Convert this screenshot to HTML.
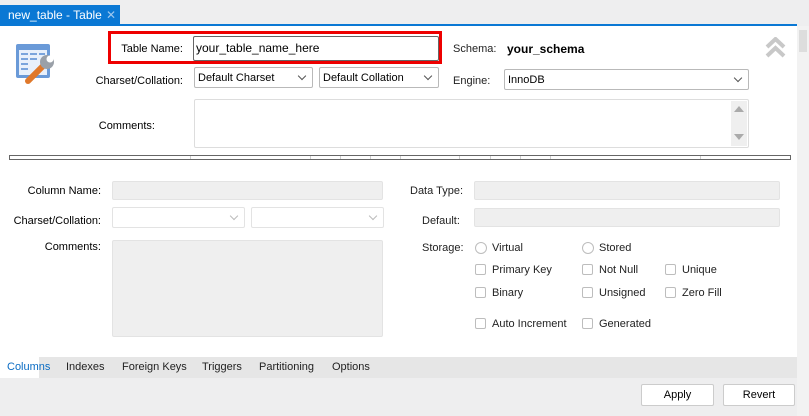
<!DOCTYPE html>
<html><head><style>
body{margin:0;width:809px;height:416px;overflow:hidden;background:#fff;font-family:"Liberation Sans",sans-serif;font-size:11px;color:#000;position:relative}
.a{position:absolute}
.lbl{position:absolute;text-align:right;white-space:nowrap}
.in{position:absolute;border:1px solid #b9b9b9;background:#fff;box-sizing:border-box;padding:4px 3px 0;white-space:nowrap;border-radius:2px}
.dis{position:absolute;border:1px solid #e3e3e3;background:#efefef;box-sizing:border-box;border-radius:2px}
.disc{position:absolute;border:1px solid #e3e3e3;background:#fff;box-sizing:border-box;border-radius:2px}
.chev{position:absolute;right:7px;top:5px;width:5px;height:5px;border-right:1px solid #555;border-bottom:1px solid #555;transform:rotate(45deg)}
.disc .chev{border-color:#bbb}
.cb{position:absolute;width:11px;height:11px;border:1px solid #bdbdbd;border-radius:2px;box-sizing:border-box;background:#fff}
.rb{position:absolute;width:12px;height:12px;border:1px solid #bdbdbd;border-radius:50%;box-sizing:border-box}
.t{position:absolute;white-space:nowrap;color:#222}
.sep{position:absolute;top:156px;width:1px;height:3px;background:#ccc}
</style></head><body>
<div class="a" style="left:0;top:0;width:809px;height:26px;background:#eeeeef"></div>
<div class="a" style="left:0;top:24px;width:797px;height:2px;background:#0a78d4"></div>
<div class="a" style="left:0;top:5px;width:120px;height:21px;background:#0a78d4;color:#fff;font-size:12px"><span class="a" style="left:8px;top:3px">new_table - Table</span><span class="a" style="left:106px;top:3px;color:#9cc7ef">✕</span></div>
<div class="a" style="left:797px;top:26px;width:12px;height:390px;background:#f2f2f2"></div>
<div class="a" style="left:799px;top:30px;width:8px;height:22px;background:#ddd"></div>

<svg class="a" style="left:14px;top:42px" width="46" height="44" viewBox="0 0 46 44">
<rect x="2" y="2" width="34" height="34" fill="#6a9ad8" rx="2"/><rect x="5" y="8" width="28" height="25" fill="#e8f0fb"/>
<g fill="#7aa4dc"><rect x="7" y="11" width="7" height="2"/><rect x="16" y="11" width="7" height="2"/><rect x="25" y="11" width="6" height="2"/><rect x="7" y="16" width="7" height="2"/><rect x="16" y="16" width="7" height="2"/><rect x="7" y="21" width="7" height="2"/><rect x="7" y="26" width="7" height="2"/></g>
<path d="M14 39 L30 23" stroke="#e0782a" stroke-width="6" stroke-linecap="round"/>
<circle cx="33" cy="20" r="7" fill="#9aa0a8"/><circle cx="36" cy="17" r="3.5" fill="#fff"/></svg>

<div class="a" style="left:108px;top:31px;width:334px;height:33px;border:3px solid #e00;box-sizing:border-box"></div>
<div class="lbl" style="left:100px;width:83px;top:43px">Table Name:</div>
<div class="in" style="left:193px;top:36px;width:246px;height:25px;border-color:#666;font-size:12px;padding:4px 2px 0">your_table_name_here</div>
<div class="t" style="left:453px;top:43px">Schema:</div>
<div class="t" style="left:507px;top:42px;font-weight:bold;font-size:12px;color:#000">your_schema</div>
<svg class="a" style="left:765px;top:37px" width="21" height="22"><path d="M2 10 L10.5 2 L19 10 M2 19 L10.5 11 L19 19" stroke="#c8c8c8" stroke-width="4" fill="none"/></svg>

<div class="lbl" style="left:80px;width:103px;top:75px">Charset/Collation:</div>
<div class="in" style="left:194px;top:67px;width:119px;height:21px">Default Charset<span class="chev"></span></div>
<div class="in" style="left:319px;top:67px;width:120px;height:21px">Default Collation<span class="chev"></span></div>
<div class="t" style="left:453px;top:75px">Engine:</div>
<div class="in" style="left:504px;top:69px;width:245px;height:21px">InnoDB<span class="chev"></span></div>

<div class="lbl" style="left:90px;width:65px;top:120px">Comments:</div>
<div class="in" style="left:194px;top:99px;width:555px;height:49px;border-color:#ddd"></div>
<div class="a" style="left:731px;top:101px;width:16px;height:45px;background:#efefef"></div>
<div class="a" style="left:734px;top:106px;border:5px solid transparent;border-bottom:6px solid #aaa;border-top:0"></div>
<div class="a" style="left:734px;top:134px;border:5px solid transparent;border-top:6px solid #aaa;border-bottom:0"></div>

<div class="a" style="left:9px;top:155px;width:782px;height:5px;border:1px solid #666;box-sizing:border-box"></div>
<div class="sep" style="left:190px"></div><div class="sep" style="left:310px"></div><div class="sep" style="left:340px"></div><div class="sep" style="left:370px"></div><div class="sep" style="left:400px"></div><div class="sep" style="left:459px"></div><div class="sep" style="left:490px"></div><div class="sep" style="left:520px"></div><div class="sep" style="left:550px"></div><div class="sep" style="left:700px"></div>

<div class="lbl" style="left:20px;width:81px;top:185px">Column Name:</div>
<div class="dis" style="left:112px;top:181px;width:271px;height:19px"></div>
<div class="lbl" style="left:5px;width:96px;top:215px">Charset/Collation:</div>
<div class="disc" style="left:112px;top:207px;width:133px;height:21px"><span class="chev"></span></div>
<div class="disc" style="left:251px;top:207px;width:133px;height:21px"><span class="chev"></span></div>
<div class="lbl" style="left:20px;width:81px;top:241px">Comments:</div>
<div class="dis" style="left:112px;top:240px;width:271px;height:97px"></div>

<div class="t" style="left:410px;top:185px">Data Type:</div>
<div class="dis" style="left:474px;top:181px;width:306px;height:19px"></div>
<div class="t" style="left:422px;top:215px">Default:</div>
<div class="dis" style="left:474px;top:208px;width:306px;height:19px"></div>
<div class="t" style="left:422px;top:242px">Storage:</div>
<div class="rb" style="left:475px;top:242px"></div><div class="t" style="left:492px;top:242px">Virtual</div>
<div class="rb" style="left:582px;top:242px"></div><div class="t" style="left:599px;top:242px">Stored</div>
<div class="cb" style="left:475px;top:264px"></div><div class="t" style="left:492px;top:264px">Primary Key</div>
<div class="cb" style="left:582px;top:264px"></div><div class="t" style="left:599px;top:264px">Not Null</div>
<div class="cb" style="left:665px;top:264px"></div><div class="t" style="left:682px;top:264px">Unique</div>
<div class="cb" style="left:475px;top:287px"></div><div class="t" style="left:492px;top:287px">Binary</div>
<div class="cb" style="left:582px;top:287px"></div><div class="t" style="left:599px;top:287px">Unsigned</div>
<div class="cb" style="left:665px;top:287px"></div><div class="t" style="left:682px;top:287px">Zero Fill</div>
<div class="cb" style="left:475px;top:318px"></div><div class="t" style="left:492px;top:318px">Auto Increment</div>
<div class="cb" style="left:582px;top:318px"></div><div class="t" style="left:599px;top:318px">Generated</div>

<div class="a" style="left:0;top:357px;width:797px;height:21px;background:#e6e6e6"></div>
<div class="a" style="left:0;top:357px;width:39px;height:21px;background:#fff"></div>
<div class="t" style="left:7px;top:361px;color:#0a6cc4">Columns</div>
<div class="t" style="left:66px;top:361px">Indexes</div>
<div class="t" style="left:122px;top:361px">Foreign Keys</div>
<div class="t" style="left:202px;top:361px">Triggers</div>
<div class="t" style="left:259px;top:361px">Partitioning</div>
<div class="t" style="left:332px;top:361px">Options</div>
<div class="a" style="left:0;top:378px;width:797px;height:38px;background:#eeeeef"></div>
<div class="in" style="left:641px;top:384px;width:73px;height:22px;border-color:#ccc;text-align:center;padding-top:4px">Apply</div>
<div class="in" style="left:723px;top:384px;width:72px;height:22px;border-color:#ccc;text-align:center;padding-top:4px">Revert</div>
</body></html>
